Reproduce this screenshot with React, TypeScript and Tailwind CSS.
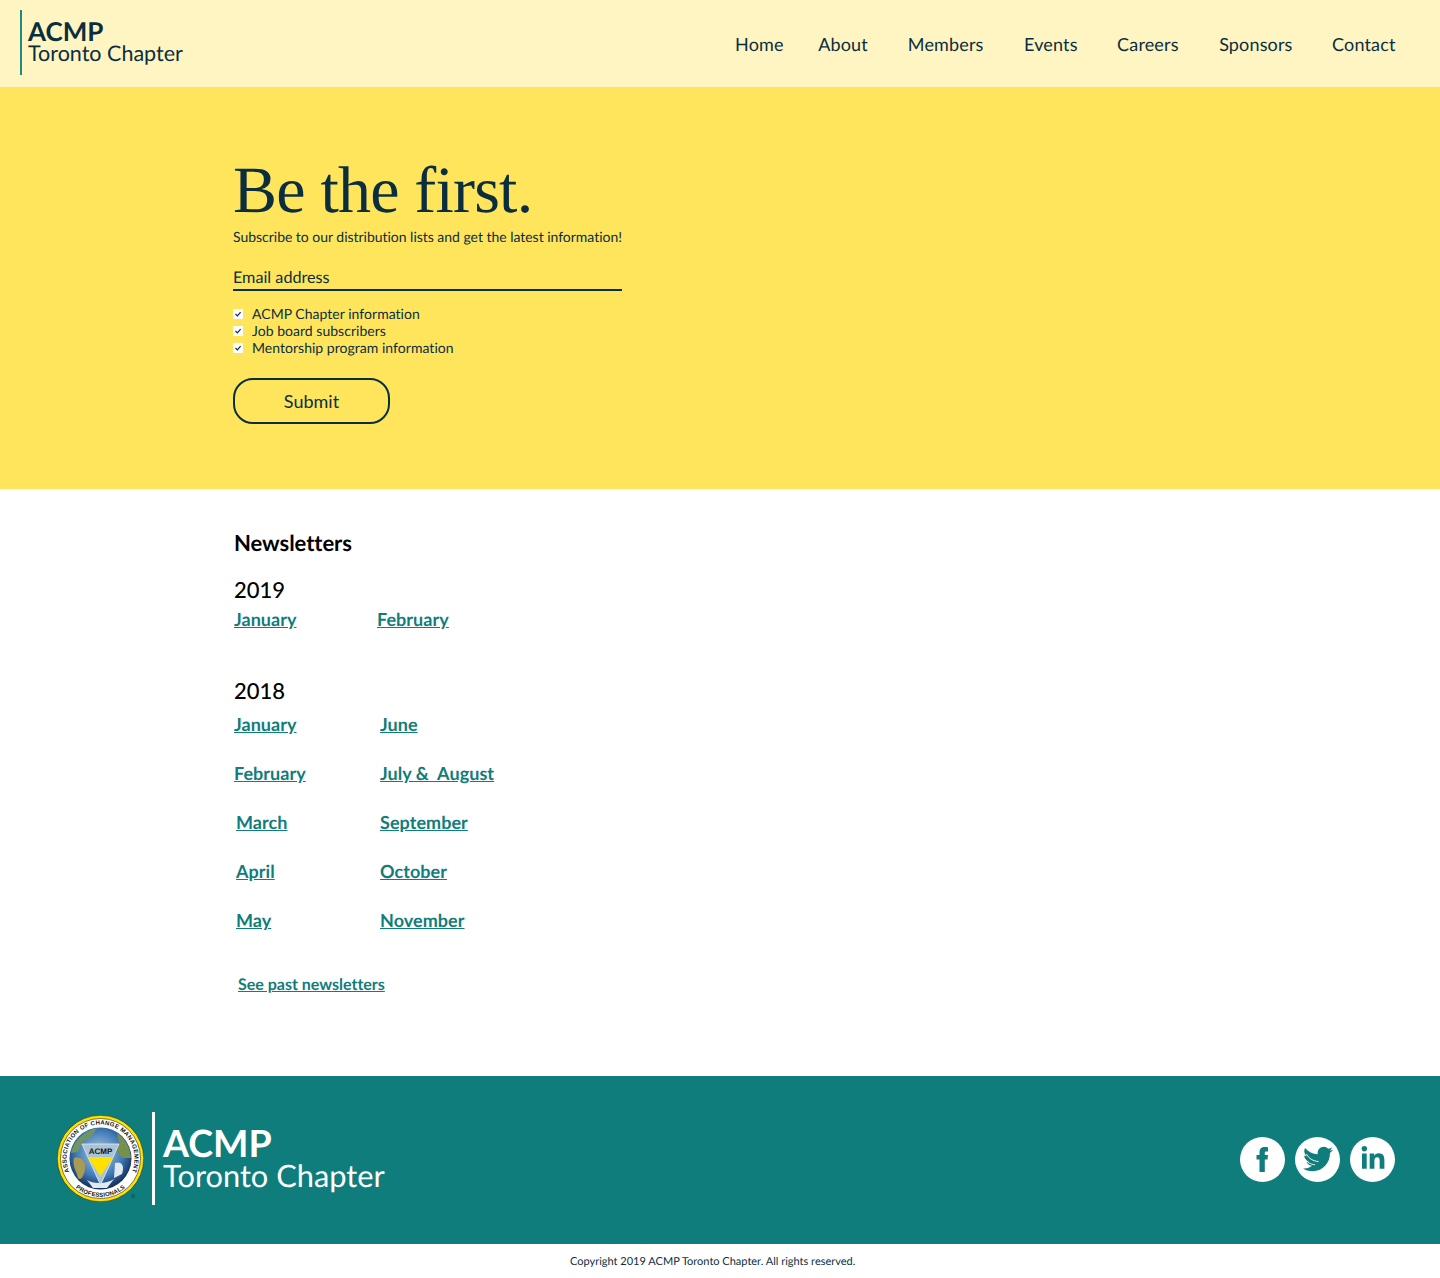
import React from 'react';
import { FaLinkedinIn } from 'react-icons/fa';

const navItems = [
  { label: 'Home', cls: '' },
  { label: 'About', cls: 'ml-[34.5px]' },
  { label: 'Members', cls: 'ml-[40px]' },
  { label: 'Events', cls: 'ml-[40.5px]' },
  { label: 'Careers', cls: 'ml-[39.5px]' },
  { label: 'Sponsors', cls: 'ml-[40.5px]' },
  { label: 'Contact', cls: 'ml-[39.5px]' },
];

const lists = ['ACMP Chapter information', 'Job board subscribers', 'Mentorship program information'];

const rows2018 = [
  { left: 'January', right: 'June', pad: '' },
  { left: 'February', right: 'July &  August', pad: '' },
  { left: 'March', right: 'September', pad: 'pl-[2px]' },
  { left: 'April', right: 'October', pad: 'pl-[2px]' },
  { left: 'May', right: 'November', pad: 'pl-[2px]' },
];

const linkCls = 'text-[18px] leading-[22px] font-bold tracking-[0.05px] text-[#0f7d7b] underline';

const Check = () => (
  <span className="flex h-[10px] w-[10px] items-center justify-center bg-white">
    <svg viewBox="0 0 10 10" className="h-[10px] w-[10px]" fill="none" stroke="#0b2e3f" strokeWidth="1.2">
      <path d="M2.5 5 L4.4 6.9 L7.6 3.2" />
    </svg>
  </span>
);

const Seal = () => (
  <svg viewBox="0 0 87 87" className="h-[87px] w-[87px] shrink-0">
    <defs>
      <radialGradient id="earth" cx="48%" cy="42%" r="60%">
        <stop offset="0%" stopColor="#b5cbe0" />
        <stop offset="62%" stopColor="#3f7ab8" />
        <stop offset="100%" stopColor="#10264e" />
      </radialGradient>
      <path id="topArc" d="M 13.800 60 A 34 34 0 1 1 73.200 60" />
      <path id="bottomArc" d="M 6.800 55 A 38.500 38.500 0 0 0 80.200 55" />
    </defs>
    <circle cx="43.5" cy="43.5" r="43.2" fill="#ffe100" stroke="#222" strokeWidth="0.5" />
    <circle cx="43.5" cy="43.5" r="40" fill="#fff" stroke="#222" strokeWidth="0.6" />
    <circle cx="43.5" cy="43.5" r="31" fill="url(#earth)" />
    <path d="M14 38 C17 25 27 16 40 13 L35 21 L25 28 L21 37 Z" fill="#6f9467" />
    <path d="M17 43 C24 41 29 46 28 54 C27 61 24 66 21 63 C20 57 15 51 17 43 Z" fill="#a89c55" />
    <path d="M60 18 C68 23 73 32 74 43 L65 43 L58 34 L62 28 Z" fill="#75904f" />
    <path d="M58 48 C64 46 68 50 65 59 L57 63 Z" fill="#e0e8f0" />
    <path d="M30 65 C36 69 50 69 57 64 L50 73 L36 73 Z" fill="#e0e8f0" />
    <path d="M25 29 L62 29 L43.500 70 Z" fill="#a9c4d6" stroke="#e4ecf2" strokeWidth="0.8" />
    <path d="M30.500 42 L56.500 42 L43.500 61 Z" fill="#ffe100" />
    <text x="43.500" y="39" textAnchor="middle" fontFamily="'Liberation Sans', sans-serif" fontWeight="700" fontSize="8" fill="#111">ACMP</text>
    <text fontFamily="'Liberation Sans', sans-serif" fontWeight="700" fontSize="6" fill="#111" letterSpacing="0.3">
      <textPath href="#topArc" startOffset="50%" textAnchor="middle">ASSOCIATION OF CHANGE MANAGEMENT</textPath>
    </text>
    <text fontFamily="'Liberation Sans', sans-serif" fontWeight="700" fontSize="6" fill="#111" letterSpacing="0.2">
      <textPath href="#bottomArc" startOffset="50%" textAnchor="middle">PROFESSIONALS</textPath>
    </text>
    <text x="74" y="83" fontFamily="'Liberation Sans', sans-serif" fontSize="6" fill="#0b3a4a">®</text>
  </svg>
);

const FacebookMark = () => (
  <svg viewBox="0 0 45 45" className="h-[45px] w-[45px]" fill="#0f7d7b">
    <path d="M19.500 35 L19.500 22.500 L16.500 22.500 L16.500 18 L19.500 18 L19.500 15.500 C19.500 11.500 21.500 10 24.800 10 L28 10.200 L28 14.400 L26 14.400 C25 14.400 24.800 15 24.800 16 L24.800 18 L28 18 L27.500 22.500 L24.800 22.500 L24.800 35 Z" />
  </svg>
);

const TwitterBird = () => (
  <svg viewBox="0 0 512 512" className="h-[30px] w-[30px]">
    <path
      fill="#0f7d7b"
      d="M459.37 151.716c.325 4.548.325 9.097.325 13.645 0 138.72-105.583 298.558-298.558 298.558-59.452 0-114.68-17.219-161.137-47.106 8.447.974 16.568 1.299 25.34 1.299 49.055 0 94.213-16.568 130.274-44.832-46.132-.975-84.792-31.188-98.112-72.772 6.498.974 12.995 1.624 19.818 1.624 9.421 0 18.843-1.3 27.614-3.573-48.081-9.747-84.143-51.98-84.143-102.985v-1.299c13.969 7.797 30.214 12.67 47.431 13.319-28.264-18.843-46.781-51.005-46.781-87.391 0-19.492 5.197-37.36 14.294-52.954 51.655 63.675 129.3 105.258 216.365 109.807-1.624-7.797-2.599-15.918-2.599-24.04 0-57.828 46.782-104.934 104.934-104.934 30.213 0 57.502 12.67 76.67 33.137 23.715-4.548 46.456-13.32 66.599-25.34-7.798 24.366-24.366 44.833-46.132 57.827 21.117-2.273 41.584-8.122 60.426-16.243-14.292 20.791-32.161 39.308-52.628 54.253z"
    />
    <path d="M60 170 C100 250 170 290 265 300 M30 250 C70 320 130 345 205 355" fill="none" stroke="#fff" strokeWidth="16" />
  </svg>
);

export default function App() {
  return (
    <div className="min-h-[1278px] bg-white font-['Lato','Open_Sans',sans-serif] text-[#0b2e3f] [font-variant-ligatures:none] [text-rendering:geometricPrecision]">
      <header className="flex h-[87px] items-start justify-between bg-[#fff5c3] pl-[20px] pr-[44.5px] pt-[10px]">
        <div className="flex h-[65px] flex-col justify-center border-l-2 border-[#1f8a80] pb-[2px] pl-[6px]">
          <div className="text-[26px] leading-[24px] font-bold">ACMP</div>
          <div className="-mt-[1px] text-[21.5px] leading-[23px]">Toronto Chapter</div>
        </div>
        <nav className="mt-[23px] flex text-[18px] leading-[22px] tracking-[0.15px]">
          {navItems.map((n) => (
            <a key={n.label} className={n.cls}>{n.label}</a>
          ))}
        </nav>
      </header>

      <section className="h-[402px] bg-[#ffe55c] pl-[233px] pt-[69px]">
        <h1 className="font-['Liberation_Serif',serif] text-[66px] leading-[70px] tracking-[-0.8px] [font-variant-ligatures:normal]">Be the first.</h1>
        <p className="mt-[1px] text-[14px] leading-[20px] tracking-[-0.025px]">Subscribe to our distribution lists and get the latest information!</p>
        <div className="mt-[21px] w-[389px] border-b-2 border-[#0b2e3f] pb-[1px] text-[16.2px] leading-[20px]">Email address</div>
        <ul className="mt-[14px] text-[14px] leading-[17px] tracking-[0.03px]">
          {lists.map((l) => (
            <li key={l} className="flex items-center gap-[9px]">
              <Check />
              {l}
            </li>
          ))}
        </ul>
        <button className="mt-[22px] flex h-[46px] w-[157px] items-center justify-center rounded-[20px] border-2 border-[#0b2e3f] text-[18px]">Submit</button>
      </section>

      <section className="h-[587px] pl-[234px] pt-[41px] text-black">
        <h2 className="text-[22px] leading-[26px] font-bold tracking-[-0.05px]">Newsletters</h2>
        <h3 className="mt-[21px] text-[22px] leading-[26px] font-medium">2019</h3>
        <div className="mt-[5px] flex">
          <a className={`${linkCls} w-[143px]`}>January</a>
          <a className={linkCls}>February</a>
        </div>
        <h3 className="mt-[48px] text-[22px] leading-[26px] font-medium">2018</h3>
        <div className="mt-[9px] flex flex-col gap-[24px]">
          {rows2018.map((r) => (
            <div key={r.left} className="flex">
              <div className={`w-[146px] ${r.pad}`}><a className={linkCls}>{r.left}</a></div>
              <a className={`${linkCls} whitespace-pre`}>{r.right}</a>
            </div>
          ))}
        </div>
        <a className="mt-[41px] ml-[4px] block text-[16px] leading-[20px] font-bold text-[#0f7d7b] underline">See past newsletters</a>
      </section>

      <footer className="flex h-[168px] items-center justify-between bg-[#0f7d7b] pl-[57px] pr-[45px] text-white">
        <div className="mb-[3px] flex items-center">
          <Seal />
          <div className="ml-[8px] flex h-[93px] flex-col justify-center border-l-[3px] border-white pl-[8px]">
            <div className="text-[37.5px] leading-[34px] font-bold">ACMP</div>
            <div className="text-[30.8px] leading-[32px]">Toronto Chapter</div>
          </div>
        </div>
        <div className="mb-[2px] flex gap-[10px]">
          <span className="flex h-[45px] w-[45px] items-center justify-center rounded-full bg-white"><FacebookMark /></span>
          <span className="flex h-[45px] w-[45px] items-center justify-center rounded-full bg-white"><TwitterBird /></span>
          <span className="flex h-[45px] w-[45px] items-center justify-center rounded-full bg-white"><FaLinkedinIn className="h-[26px] w-[26px] text-[#0f7d7b]" /></span>
        </div>
      </footer>

      <p className="pt-[11px] pl-[570px] text-[11px] leading-[14px]">Copyright 2019 ACMP Toronto Chapter. All rights reserved.</p>
    </div>
  );
}
